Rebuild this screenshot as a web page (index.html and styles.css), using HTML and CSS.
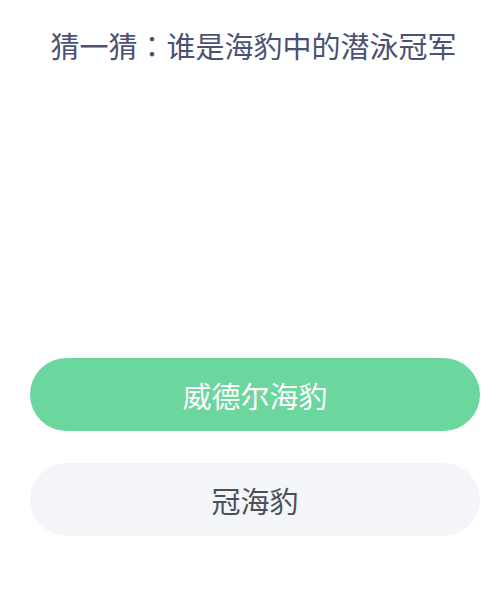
FILE: index.html
```html
<!DOCTYPE html>
<html lang="zh-CN">
    <head>
        <meta charset="UTF-8">
        <meta name="viewport" content="width=device-width, initial-scale=1.0">
        <title>猜一猜</title>
        <link rel="stylesheet" href="styles.css">
    </head>
    <body>
        <main>
            <h1 class="question">猜一猜<span class="colon" lang="zh-TW">：</span>谁是海豹中的潜泳冠军</h1>

            <div class="picture"></div>

            <section class="options">
                <button type="button" class="option option-right">威德尔海豹</button>
                <button type="button" class="option">冠海豹</button>
            </section>
        </main>
    </body>
</html>
```

FILE: styles.css
```css
body {
    font-family: "Noto Sans CJK SC", "Noto Sans", sans-serif;
    margin: 0;
    background-color: #ffffff;
}

main {
    display: flex;
    flex-direction: column;
}

.question {
    margin: 0;
    padding: 25px 0 0 6px;
    font-size: 29px;
    font-weight: normal;
    line-height: 40px;
    text-align: center;
    color: #4b5173;
}

/* centred full-width colon, like the original */
.colon {
    font-family: "Noto Sans CJK TC", "Noto Sans CJK SC", sans-serif;
}

.picture {
    height: 293px;
}

.options {
    display: flex;
    flex-direction: column;
    gap: 32px;
    padding: 0 21px 0 30px;
}

.option {
    height: 73px;
    border: none;
    border-radius: 37px;
    background-color: #f3f5f8;
    color: #4a4f58;
    font-family: inherit;
    font-size: 29px;
    cursor: pointer;
}

.option-right {
    background-color: #6bd69e;
    color: #ffffff;
}
```
